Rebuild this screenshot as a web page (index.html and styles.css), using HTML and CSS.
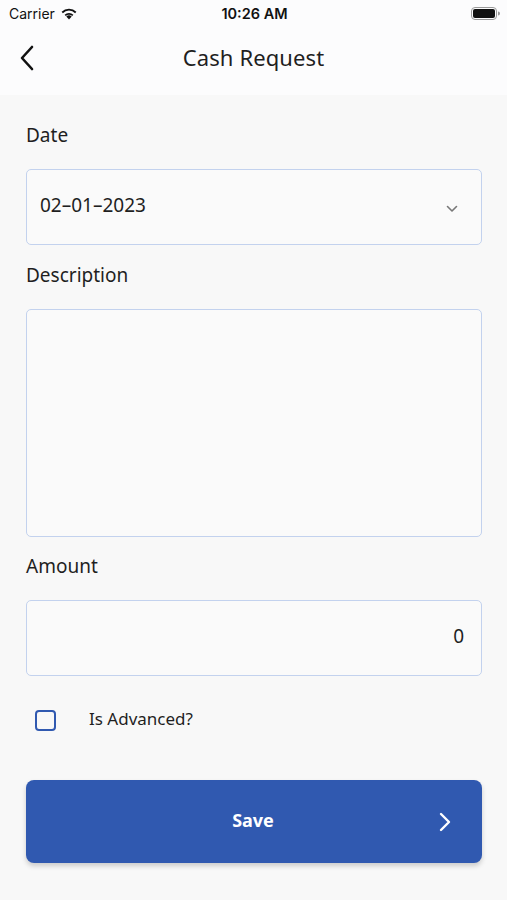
FILE: index.html
```html
<!DOCTYPE html>
<html lang="en">
<head>
  <meta charset="UTF-8" />
  <meta name="viewport" content="width=device-width, initial-scale=1.0" />
  <title>Cash Request</title>
  <link rel="stylesheet" href="styles.css">
</head>
<body>
  <div class="status-bar">
    <div class="carrier">Carrier
      <svg class="wifi" width="18" height="13" viewBox="0 0 18 13">
        <path d="M9 12.5 L6.3 9.6 A4 4 0 0 1 11.7 9.6 Z" fill="#111"/>
        <path d="M4.6 7.8 A6.4 6.4 0 0 1 13.4 7.8 L12.2 9.1 A4.6 4.6 0 0 0 5.8 9.1 Z" fill="#111"/>
        <path d="M1.6 4.8 A10.4 10.4 0 0 1 16.4 4.8 L15.1 6.2 A8.5 8.5 0 0 0 2.9 6.2 Z" fill="#111"/>
      </svg>
    </div>
    <div class="time">10:26 AM</div>
    <div class="battery">
      <svg width="29" height="13" viewBox="0 0 29 13">
        <rect x="0.5" y="0.5" width="25" height="12" rx="3.5" fill="none" stroke="#999" />
        <rect x="2" y="2" width="22" height="9" rx="2" fill="#111" />
        <path d="M27 4.5 v4 a2 2 0 0 0 0 -4z" fill="#999" />
      </svg>
    </div>
  </div>

  <header class="nav">
    <svg class="back" width="16" height="26" viewBox="0 0 16 26">
      <path d="M13 2 L3 13 L13 24" fill="none" stroke="#111" stroke-width="2.6" stroke-linecap="round" stroke-linejoin="round"/>
    </svg>
    <h1>Cash Request</h1>
  </header>

  <main class="form">
    <label class="label">Date</label>
    <div class="field select">
      <span>02–01–2023</span>
      <svg width="12" height="8" viewBox="0 0 12 8">
        <path d="M1.5 1.5 L6 6 L10.5 1.5" fill="none" stroke="#777" stroke-width="1.6" stroke-linecap="round" stroke-linejoin="round"/>
      </svg>
    </div>

    <label class="label">Description</label>
    <div class="field textarea"></div>

    <label class="label">Amount</label>
    <div class="field amount"><span>0</span></div>

    <div class="check-row">
      <span class="checkbox"></span>
      <span class="check-label">Is Advanced?</span>
    </div>

    <button class="save">
      <span>Save</span>
      <svg class="save-arrow" width="12" height="20" viewBox="0 0 12 20">
        <path d="M2 2 L10 10 L2 18" fill="none" stroke="#fff" stroke-width="2.4" stroke-linecap="round" stroke-linejoin="round"/>
      </svg>
    </button>
  </main>
</body>
</html>
```

FILE: styles.css
```css
/* Variables & Reset */
:root {
  --bg: #f8f8f8;
  --bar-bg: #fcfcfd;
  --text: #1f1f1f;
  --border: #c3d2ee;
  --primary: #3059b0;
}
* { margin: 0; padding: 0; box-sizing: border-box; }
body { font-family: 'Noto Sans', sans-serif; background: var(--bg); color: var(--text); width: 507px; height: 900px; overflow: hidden; }

/* Status bar */
.status-bar { height: 30px; background: var(--bar-bg); display: flex; align-items: center; justify-content: space-between; padding: 0 7px 0 9px; font-family: 'Inter', sans-serif; font-size: 14px; color: #111; }
.carrier { display: flex; align-items: center; gap: 5px; width: 110px; padding-bottom: 4px; }
.time { font-weight: 600; font-size: 14.5px; padding-bottom: 4px; }
.battery { width: 110px; display: flex; justify-content: flex-end; padding-bottom: 4px; }

/* Nav */
.nav { height: 65px; background: var(--bar-bg); display: flex; align-items: center; justify-content: center; position: relative; padding-bottom: 11px; }
.nav .back { position: absolute; left: 19px; top: 15px; }
.nav h1 { font-size: 22px; font-weight: 400; letter-spacing: 0.1px; }

/* Form */
.form { padding: 26px 25px 0 26px; display: flex; flex-direction: column; }
.label { font-size: 19px; line-height: 28px; display: block; margin-bottom: 20px; }
.field { background: #fafafa; border: 1.5px solid var(--border); border-radius: 5px; margin-bottom: 16px; }
.select { height: 76px; display: flex; align-items: center; justify-content: space-between; padding: 0 23px 5px 13px; font-size: 19px; }
.select svg { margin-top: 9px; }
.textarea { height: 228px; margin-bottom: 15px; }
.amount { height: 76px; display: flex; align-items: center; justify-content: flex-end; padding: 0 17px 5px 0; font-size: 19px; }

.check-row { display: flex; align-items: center; margin-top: 12px; padding-left: 9px; height: 28px; }
.checkbox { width: 21px; height: 21px; border: 2.2px solid var(--primary); border-radius: 4px; margin-top: 4px; }
.check-label { font-size: 17px; margin-left: 33px; }

.save { margin-top: 48px; height: 83px; border: none; border-radius: 8px; background: var(--primary); color: #fff; font-family: 'Noto Sans', sans-serif; font-size: 18px; font-weight: 700; display: flex; align-items: center; justify-content: center; position: relative; padding-bottom: 4px; box-shadow: 0 3px 5px rgba(0,0,0,0.18); }
.save span { margin-left: -2px; }
.save-arrow { position: absolute; right: 31px; top: 32px; }
```
